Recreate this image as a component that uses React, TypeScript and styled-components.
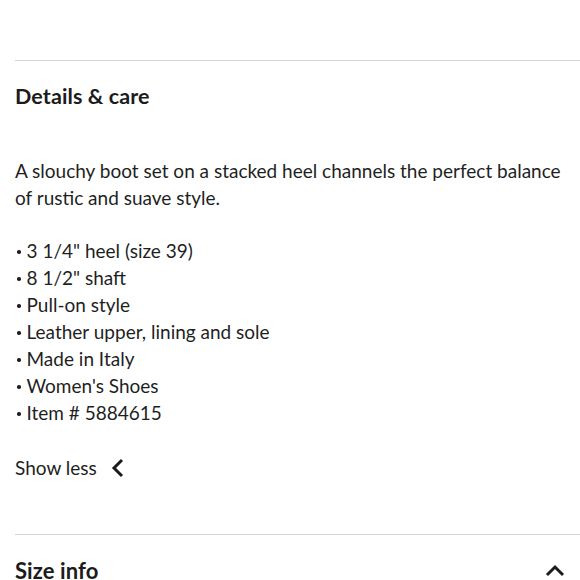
import React from "react";
import styled, { createGlobalStyle } from "styled-components";

const Global = createGlobalStyle`
  html, body { margin: 0; padding: 0; background: #fff; }
  body { font-family: Lato, "Noto Sans", sans-serif; color: #1f1f1f; }
`;

const Page = styled.div`
  width: 580px;
  height: 580px;
  overflow: hidden;
  padding-top: 60px;
  padding-left: 15px;
  box-sizing: border-box;
`;

const Section = styled.section`
  border-top: 1.5px solid #d4d4d4;
`;

const Heading = styled.h2<{ $size: number }>`
  margin: 0;
  font-size: ${(p) => p.$size}px;
  font-weight: 700;
  color: #1c1c1c;
  letter-spacing: 0.1px;
`;

const HeaderRow = styled.div<{ $pt: number }>`
  display: flex;
  align-items: center;
  justify-content: space-between;
  padding-top: ${(p) => p.$pt}px;
  padding-right: 15px;
`;

const Body = styled.p`
  margin: 0;
  margin-top: 48px;
  font-size: 19px;
  line-height: 27px;
  padding-right: 10px;
`;

const List = styled.ul`
  list-style: none;
  margin: 26px 0 0;
  padding: 0;
  font-size: 19px;
  line-height: 27px;
`;

const Item = styled.li`
  display: flex;
  align-items: center;
  &::before {
    content: "";
    width: 3.5px;
    height: 3.5px;
    border-radius: 50%;
    background: #1f1f1f;
    margin: 3px 6px 0 2px;
    flex: none;
  }
`;

const Toggle = styled.button`
  display: flex;
  align-items: center;
  gap: 14px;
  margin: 30px 0 55px;
  padding: 0;
  border: none;
  background: none;
  font-family: inherit;
  font-size: 19px;
  color: #1f1f1f;
  cursor: pointer;
`;

const Chevron = ({ dir }: { dir: "left" | "up" }) =>
  dir === "left" ? (
    <svg width="14" height="20" viewBox="0 0 14 20" fill="none">
      <path d="M11 2 L3 10 L11 18" stroke="#1c1c1c" strokeWidth="3" />
    </svg>
  ) : (
    <svg width="20" height="14" viewBox="0 0 20 14" fill="none">
      <path d="M2 11 L10 3 L18 11" stroke="#1c1c1c" strokeWidth="3" />
    </svg>
  );

const items = [
  '3 1/4" heel (size 39)',
  '8 1/2" shaft',
  "Pull-on style",
  "Leather upper, lining and sole",
  "Made in Italy",
  "Women's Shoes",
  "Item # 5884615",
];

export default function App() {
  return (
    <>
      <Global />
      <Page>
        <Section>
          <HeaderRow $pt={22}>
            <Heading $size={21.5}>Details &amp; care</Heading>
          </HeaderRow>
          <Body>
            A slouchy boot set on a stacked heel channels the perfect balance of rustic and suave style.
          </Body>
          <List>
            {items.map((t) => (
              <Item key={t}>{t}</Item>
            ))}
          </List>
          <Toggle>
            Show less <Chevron dir="left" />
          </Toggle>
        </Section>
        <Section>
          <HeaderRow $pt={22}>
            <Heading $size={22}>Size info</Heading>
            <Chevron dir="up" />
          </HeaderRow>
        </Section>
      </Page>
    </>
  );
}
